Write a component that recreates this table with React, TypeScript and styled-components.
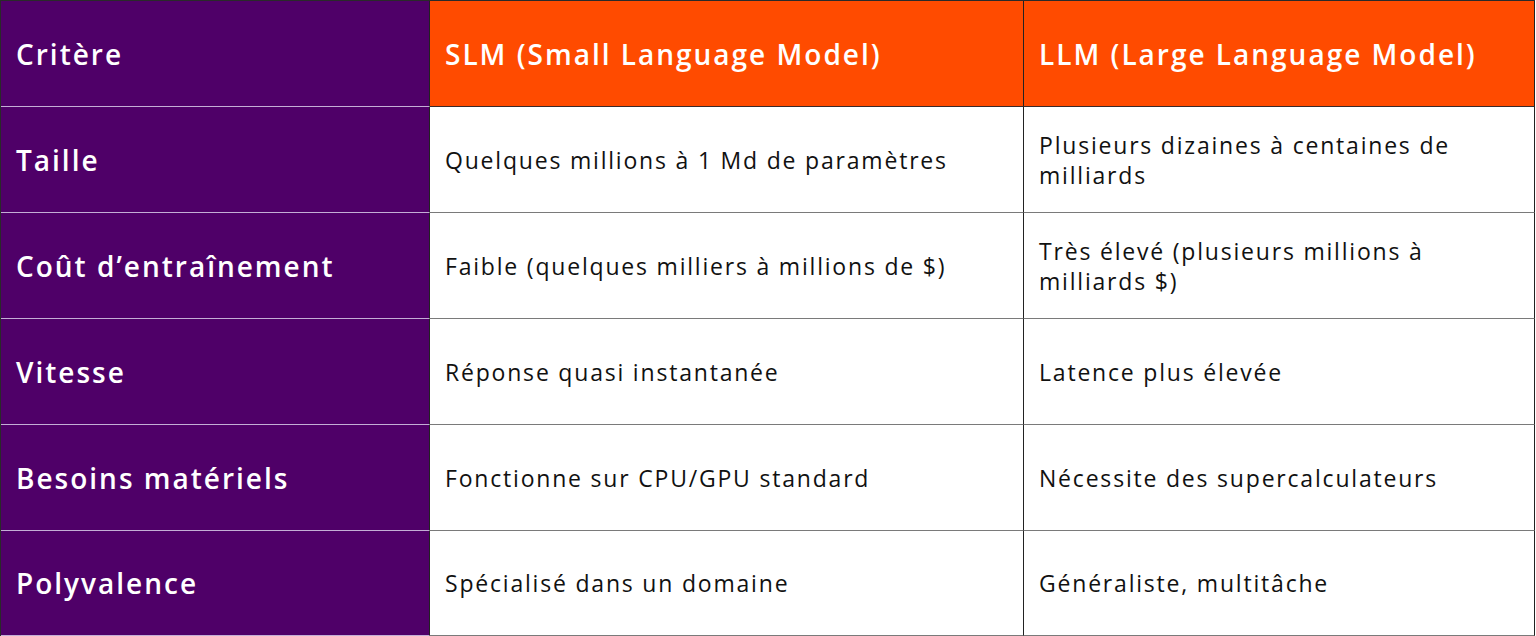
import styled, { createGlobalStyle } from "styled-components";

const GlobalStyle = createGlobalStyle`
  html, body {
    margin: 0;
    padding: 0;
    overflow: hidden;
    background: #ffffff;
  }
  body {
    font-family: "Open Sans", "Liberation Sans", sans-serif;
  }
`;

const rows = [
  {
    label: "Taille",
    slm: "Quelques millions à 1 Md de paramètres",
    llm: "Plusieurs dizaines à centaines de milliards",
  },
  {
    label: "Coût d’entraînement",
    slm: "Faible (quelques milliers à millions de $)",
    llm: "Très élevé (plusieurs millions à milliards $)",
  },
  {
    label: "Vitesse",
    slm: "Réponse quasi instantanée",
    llm: "Latence plus élevée",
  },
  {
    label: "Besoins matériels",
    slm: "Fonctionne sur CPU/GPU standard",
    llm: "Nécessite des supercalculateurs",
  },
  {
    label: "Polyvalence",
    slm: "Spécialisé dans un domaine",
    llm: "Généraliste, multitâche",
  },
];

const Table = styled.div`
  display: grid;
  grid-template-columns: 429px 594px 511px;
  grid-template-rows: repeat(5, 106px) 105px;
  width: 1534px;
  border-top: 1px solid #2a2a2a;
  border-left: 1px solid #2a2a2a;
`;

type Tone = "criteria" | "head" | "body";

const Cell = styled.div<{ $tone: Tone }>`
  display: flex;
  align-items: center;
  padding: 0 14px 0 15px;
  border-right: 1px solid #222222;
  border-bottom: 1px solid
    ${(p) => (p.$tone === "criteria" ? "#c4aed6" : p.$tone === "head" ? "#3a2a2a" : "#7a7a7a")};
  background: ${(p) =>
    p.$tone === "criteria" ? "#4f0068" : p.$tone === "head" ? "#ff4b00" : "#ffffff"};
  color: ${(p) => (p.$tone === "body" ? "#111111" : "#ffffff")};
  font-size: ${(p) => (p.$tone === "body" ? "23px" : "28px")};
  font-weight: ${(p) => (p.$tone === "body" ? 400 : 600)};
  line-height: ${(p) => (p.$tone === "body" ? "30px" : "34px")};
  letter-spacing: ${(p) => (p.$tone === "body" ? "1.8px" : "2px")};
`;

export default function App() {
  return (
    <>
      <GlobalStyle />
      <Table>
        <Cell $tone="criteria">Critère</Cell>
        <Cell $tone="head">SLM (Small Language Model)</Cell>
        <Cell $tone="head">LLM (Large Language Model)</Cell>
        {rows.map((r) => (
          <>
            <Cell key={r.label + "-c"} $tone="criteria">{r.label}</Cell>
            <Cell key={r.label + "-s"} $tone="body">{r.slm}</Cell>
            <Cell key={r.label + "-l"} $tone="body">{r.llm}</Cell>
          </>
        ))}
      </Table>
    </>
  );
}
